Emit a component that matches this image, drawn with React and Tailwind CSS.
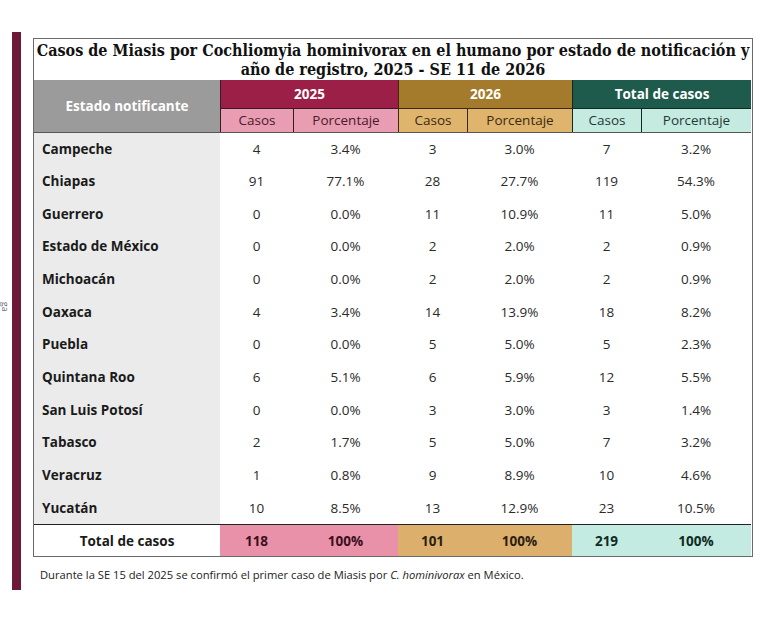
import React from "react";

const rows = [
  ["Campeche", "4", "3.4%", "3", "3.0%", "7", "3.2%"],
  ["Chiapas", "91", "77.1%", "28", "27.7%", "119", "54.3%"],
  ["Guerrero", "0", "0.0%", "11", "10.9%", "11", "5.0%"],
  ["Estado de México", "0", "0.0%", "2", "2.0%", "2", "0.9%"],
  ["Michoacán", "0", "0.0%", "2", "2.0%", "2", "0.9%"],
  ["Oaxaca", "4", "3.4%", "14", "13.9%", "18", "8.2%"],
  ["Puebla", "0", "0.0%", "5", "5.0%", "5", "2.3%"],
  ["Quintana Roo", "6", "5.1%", "6", "5.9%", "12", "5.5%"],
  ["San Luis Potosí", "0", "0.0%", "3", "3.0%", "3", "1.4%"],
  ["Tabasco", "2", "1.7%", "5", "5.0%", "7", "3.2%"],
  ["Veracruz", "1", "0.8%", "9", "8.9%", "10", "4.6%"],
  ["Yucatán", "10", "8.5%", "13", "12.9%", "23", "10.5%"],
];

export default function App() {
  return (
    <div
      className="relative w-[761px] h-[639px] bg-white overflow-hidden text-[#1a1a1a]"
      style={{ fontFamily: '"Open Sans", "Noto Sans", sans-serif' }}
    >
      <div className="absolute left-[0px] top-[300px] text-[9px] text-gray-500 rotate-90">ga</div>
      <div className="flex pt-[32px] pl-[12px]">
        <div className="w-[9px] h-[558px] bg-[#6d1836] shrink-0" />
        <div className="ml-[12px] pt-[6px]">
          <div className="w-[720px] border-[1.5px] border-[#6a6a6a]">
            <div
              className="text-center font-bold text-[16px] leading-[19px] pt-[2px] pb-[1px] text-[#111] whitespace-nowrap"
              style={{ fontFamily: '"DejaVu Serif Condensed", "Liberation Serif", serif' }}
            >
              <div>Casos de Miasis por Cochliomyia hominivorax en el humano por estado de notificación y</div>
              <div>año de registro, 2025 - SE 11 de 2026</div>
            </div>
            <div className="grid grid-cols-[186px_73px_105px_69px_105px_69px_110px] text-[13.5px]">
              <div className="row-span-2 bg-[#9b9b9b] text-white font-bold flex items-center justify-center">
                Estado notificante
              </div>
              <div className="col-span-2 h-[28px] bg-[#9b1f47] text-white font-bold flex items-center justify-center border-l border-[#3a1a22]">
                2025
              </div>
              <div className="col-span-2 h-[28px] bg-[#a47b2c] text-white font-bold flex items-center justify-center border-l border-[#3a2a12]">
                2026
              </div>
              <div className="col-span-2 h-[28px] bg-[#1f5b4d] text-white font-bold flex items-center justify-center border-l border-[#0f2a24]">
                Total de casos
              </div>
              <div className="h-[24px] bg-[#e89db2] text-[#4a1a2a] flex items-center justify-center border-l border-t border-[#3a1a22]">Casos</div>
              <div className="h-[24px] bg-[#e89db2] text-[#4a1a2a] flex items-center justify-center border-l border-t border-[#3a1a22]">Porcentaje</div>
              <div className="h-[24px] bg-[#dfb46c] text-[#3a2a12] flex items-center justify-center border-l border-t border-[#3a2a12]">Casos</div>
              <div className="h-[24px] bg-[#dfb46c] text-[#3a2a12] flex items-center justify-center border-l border-t border-[#3a2a12]">Porcentaje</div>
              <div className="h-[24px] bg-[#c5ebe1] text-[#1f3a34] flex items-center justify-center border-l border-t border-[#0f2a24]">Casos</div>
              <div className="h-[24px] bg-[#c5ebe1] text-[#1f3a34] flex items-center justify-center border-l border-t border-[#0f2a24]">Porcentaje</div>
              {rows.map((r, i) => (
                <React.Fragment key={r[0]}>
                  <div className={`h-[32.7px] bg-[#ebebeb] font-bold pl-[8px] flex items-center ${i === 0 ? "border-t border-[#555]" : ""}`}>
                    {r[0]}
                  </div>
                  {r.slice(1).map((v, j) => (
                    <div
                      key={j}
                      className={`h-[32.7px] flex items-center justify-center text-[#2a2a2a] ${i === 0 ? "border-t border-[#555]" : ""}`}
                    >
                      {v}
                    </div>
                  ))}
                </React.Fragment>
              ))}
              <div className="h-[32px] bg-white font-bold flex items-center justify-center border-t-[1.5px] border-[#222]">Total de casos</div>
              <div className="h-[32px] bg-[#e891a9] font-bold text-[#3a1020] flex items-center justify-center border-t-[1.5px] border-[#222]">118</div>
              <div className="h-[32px] bg-[#e891a9] font-bold text-[#3a1020] flex items-center justify-center border-t-[1.5px] border-[#222]">100%</div>
              <div className="h-[32px] bg-[#dcb06c] font-bold text-[#2a1f10] flex items-center justify-center border-t-[1.5px] border-[#222]">101</div>
              <div className="h-[32px] bg-[#dcb06c] font-bold text-[#2a1f10] flex items-center justify-center border-t-[1.5px] border-[#222]">100%</div>
              <div className="h-[32px] bg-[#c4ebe1] font-bold text-[#102a24] flex items-center justify-center border-t-[1.5px] border-[#222]">219</div>
              <div className="h-[32px] bg-[#c4ebe1] font-bold text-[#102a24] flex items-center justify-center border-t-[1.5px] border-[#222]">100%</div>
            </div>
          </div>
          <div className="mt-[10px] ml-[7px] text-[11.2px] text-[#222]">
            Durante la SE 15 del 2025 se confirmó el primer caso de Miasis por <i>C. hominivorax</i> en México.
          </div>
        </div>
      </div>
    </div>
  );
}
